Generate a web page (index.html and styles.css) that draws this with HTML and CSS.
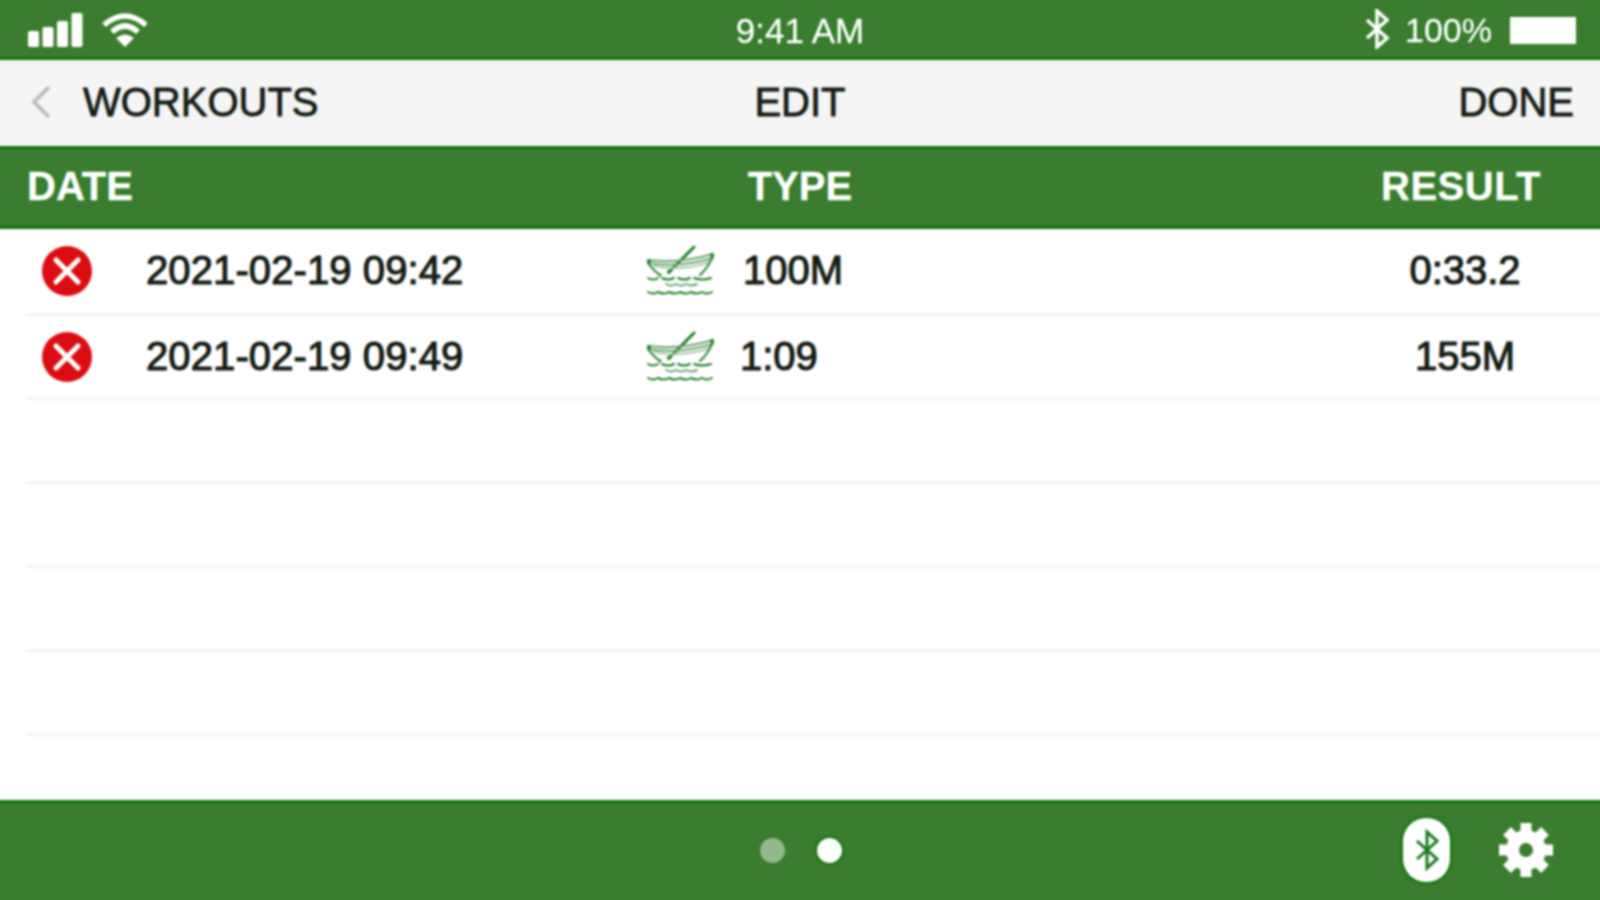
FILE: index.html
```html
<!DOCTYPE html>
<html lang="en">
<head>
  <meta charset="UTF-8">
  <title>Workouts</title>
  <link rel="stylesheet" href="styles.css">
</head>
<body>

  <svg class="d-none">
    <symbol id="boat" viewBox="0 0 70 52">
      <g fill="none" stroke="#1f8028" stroke-width="2" stroke-linecap="round">
        <path d="M48 2 L23 27" stroke-width="3"/>
        <path d="M2 15 Q34 19 67 9" stroke="#6aa672"/>
        <path d="M2 18 Q34 23 67 13" stroke="#6aa672"/>
        <path d="M8 21 Q34 26 62 18" stroke="#a9cdac"/>
        <path d="M2 18 Q8 26 14 30 M67 10 Q63 22 54 30"/>
        <path d="M2 33 q5 3 10 0 M16 33 q6 3 12 0 M32 33 q6 3 12 0 M48 33 q8 3 17 0"/>
        <path d="M20 39 q5 3 10 0 q5 3 10 0 q5 3 11 0" stroke="#6aa672"/>
        <path d="M2 47 q5 3 10 0 q6 3 11 0 q6 3 11 0 q6 3 11 0 q6 3 11 0 q5 3 10 0"/>
      </g>
      <g fill="#1f8028">
        <circle cx="3" cy="16" r="2"/>
        <circle cx="66" cy="10" r="2"/>
        <circle cx="23" cy="27" r="2"/>
        <circle cx="14" cy="30" r="1.5"/>
      </g>
    </symbol>
    <symbol id="remove" viewBox="0 0 50 50">
      <circle cx="25" cy="25" r="25" fill="#dc0d12"/>
      <path d="M14 14 L36 36 M36 14 L14 36" stroke="#fff" stroke-width="5" stroke-linecap="round"/>
    </symbol>
  </svg>

  <div class="screen">

    <div class="status-bar">
      <div class="status-left">
        <svg class="icon-signal" width="56" height="34" viewBox="0 0 56 34">
          <rect x="0" y="18" width="11" height="16" rx="2"/>
          <rect x="14.5" y="14" width="11" height="20" rx="2"/>
          <rect x="29" y="8" width="11" height="26" rx="2"/>
          <rect x="43.5" y="0" width="11" height="34" rx="2"/>
        </svg>
        <svg class="icon-wifi" width="48" height="36" viewBox="0 0 48 36">
          <path d="M3 13 Q24 -5 45 13" />
          <path d="M11 20 Q24 8 37 20" />
          <path d="M24 35 L15 26 Q24 19 33 26 Z" class="wifi-fill"/>
        </svg>
      </div>
      <div class="status-time">9:41 AM</div>
      <div class="status-right">
        <svg class="icon-bt" width="26" height="40" viewBox="0 0 26 40">
          <path d="M3 11 L23 29 L13 38 V2 L23 11 L3 29"/>
        </svg>
        <span>100%</span>
        <div class="battery"></div>
      </div>
    </div>

    <div class="nav-bar">
      <div class="nav-back">
        <svg width="20" height="34" viewBox="0 0 20 34">
          <path d="M18 2 L3 17 L18 32" fill="none" stroke="#b9b9b9" stroke-width="3.5"/>
        </svg>
        <span>WORKOUTS</span>
      </div>
      <div class="nav-title">EDIT</div>
      <div class="nav-done">DONE</div>
    </div>

    <div class="table-head">
      <div class="col-date">DATE</div>
      <div class="col-type">TYPE</div>
      <div class="col-result">RESULT</div>
    </div>

    <div class="rows">
      <div class="row">
        <svg class="row-remove"><use href="#remove"/></svg>
        <div class="row-date">2021-02-19 09:42</div>
        <svg class="row-boat"><use href="#boat"/></svg>
        <div class="row-type">100M</div>
        <div class="row-result">0:33.2</div>
      </div>
      <div class="row">
        <svg class="row-remove"><use href="#remove"/></svg>
        <div class="row-date">2021-02-19 09:49</div>
        <svg class="row-boat"><use href="#boat"/></svg>
        <div class="row-type row-type-time">1:09</div>
        <div class="row-result">155M</div>
      </div>
      <div class="row"></div>
      <div class="row"></div>
      <div class="row"></div>
      <div class="row"></div>
    </div>

    <div class="bottom-bar">
      <div class="dots">
        <span class="dot"></span>
        <span class="dot dot-active"></span>
      </div>
      <div class="bottom-icons">
        <div class="bt-pill">
          <svg width="26" height="42" viewBox="0 0 26 40">
            <path d="M3 11 L23 29 L13 38 V2 L23 11 L3 29"/>
          </svg>
        </div>
        <svg class="icon-gear" width="56" height="56" viewBox="0 0 56 56">
          <g stroke="#fff" stroke-width="11">
            <path d="M28 1 V55 M1 28 H55 M9 9 L47 47 M47 9 L9 47"/>
          </g>
          <circle cx="28" cy="28" r="20" fill="#fff"/>
          <circle cx="28" cy="28" r="7" fill="#3b7d2f"/>
        </svg>
      </div>
    </div>

  </div>

</body>
</html>
```

FILE: styles.css
```css
* {
  box-sizing: border-box;
}
html, body {
  height: 100%;
  overflow: hidden;
}
body {
  margin: 0;
  padding: 0;
  font-family: "Liberation Sans", Arial, sans-serif;
  font-size: 40px;
  color: #141c14;
  background: white;
}
.d-none {
  display: none;
}
/* 4px bigger than the window so the blur doesn't fade the edges */
.screen {
  width: 1604px;
  height: 904px;
  margin: -2px;
  display: flex;
  flex-direction: column;
  overflow: hidden;
  filter: blur(0.8px);
}

/* status bar */
.status-bar {
  position: relative;
  height: 62px;
  background: #3b7d2f;
  border-bottom: 3px solid #0f760f;
  color: white;
  font-size: 35px;
  display: flex;
  align-items: center;
  justify-content: space-between;
  padding: 6px 26px 0 30px;
  text-shadow: 0 0 3px #0f760f;
  -webkit-text-stroke: 0.3px white;
}
.status-left {
  display: flex;
  align-items: center;
  gap: 17px;
  margin-top: -1px;
}
.icon-signal {
  fill: white;
}
.icon-wifi path {
  fill: none;
  stroke: white;
  stroke-width: 5.5;
}
.icon-wifi .wifi-fill {
  fill: white;
  stroke: none;
}
.status-time {
  position: absolute;
  left: 0;
  right: 0;
  text-align: center;
  pointer-events: none;
}
.status-right {
  display: flex;
  align-items: center;
  font-size: 34px;
}
.icon-bt {
  fill: none;
  stroke: white;
  stroke-width: 3.5;
  margin-top: -3px;
  margin-right: 15px;
}
.battery {
  width: 66px;
  height: 27px;
  margin-left: 18px;
  background: white;
}

/* nav */
.nav-bar {
  position: relative;
  height: 86px;
  background: #f5f5f5;
  display: flex;
  align-items: center;
  justify-content: space-between;
  padding: 0 28px 2px 33px;
  -webkit-text-stroke: 0.8px #141c14;
}
.nav-back {
  display: flex;
  align-items: center;
  gap: 32px;
}
.nav-title {
  position: absolute;
  left: 0;
  right: 0;
  text-align: center;
}

/* table */
.table-head {
  height: 83px;
  background: #3b7d2f;
  border-top: 3px solid #0f760f;
  border-bottom: 3px solid #0f760f;
  color: white;
  font-weight: bold;
  display: flex;
  align-items: center;
  padding: 0 0 2px 29px;
  text-shadow: 0 0 3px #0f760f;
  -webkit-text-stroke: 0.4px white;
}
.col-date {
  width: 693px;
}
.col-type {
  width: 160px;
  text-align: center;
}
.col-result {
  margin-left: 501px;
  letter-spacing: 0.5px;
}
.rows {
  flex: 1;
  background: white;
  padding-left: 28px;
}
.row {
  height: 84px;
  border-bottom: 3px solid #f4f4f4;
  display: flex;
  align-items: center;
  -webkit-text-stroke: 1.1px #141c14;
}
.row:first-child {
  height: 87px;
  padding-bottom: 1px;
}
.row-remove {
  width: 50px;
  height: 50px;
  margin-left: 16px;
  margin-right: 54px;
}
.row-date {
  width: 500px;
  letter-spacing: 0.1px;
}
.row-boat {
  width: 70px;
  height: 52px;
  margin-right: 27px;
}
.row-type {
  width: 642px;
}
.row-type-time {
  margin-left: -3px;
  margin-right: 3px;
}
.row-result {
  width: 160px;
  text-align: center;
  white-space: nowrap;
}

/* bottom */
.bottom-bar {
  position: relative;
  height: 102px;
  margin-top: auto;
  background: #3b7d2f;
  border-top: 3px solid #0f760f;
  display: flex;
  align-items: center;
  justify-content: flex-end;
  padding: 0 48px 5px 0;
}
.dots {
  position: absolute;
  left: 762px;
  top: 0;
  bottom: 5px;
  display: flex;
  align-items: center;
  gap: 32px;
}
.dot {
  width: 25px;
  height: 25px;
  border-radius: 50%;
  background: #93b98d;
}
.dot-active {
  background: white;
  box-shadow: 0 0 3px 2px #0f760f;
}
.bottom-icons {
  display: flex;
  align-items: center;
  gap: 48px;
}
.bt-pill {
  width: 47px;
  height: 64px;
  border-radius: 23px;
  background: white;
  box-shadow: 0 0 3px 2px #0f760f;
  display: flex;
  align-items: center;
  justify-content: center;
}
.bt-pill path {
  fill: none;
  stroke: #1a7a1a;
  stroke-width: 3;
}
```
